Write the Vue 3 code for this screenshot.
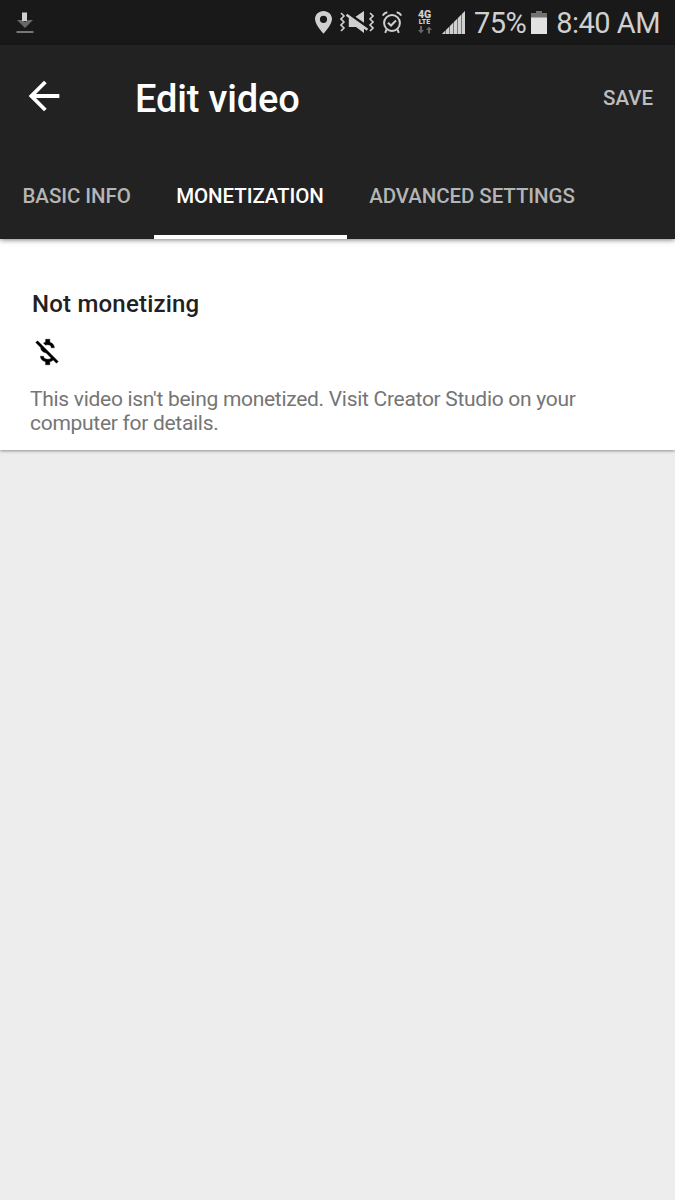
<template>
  <div class="screen">
    <header class="status-bar">
      <svg class="status-bar__download" width="18" height="22" viewBox="0 0 18 22">
        <path fill="#686868" d="M1 8h5l3 2 3-2h5l-8 8z" />
        <path fill="#d0d0d0" d="M6 0.5h5V9H6z" />
        <path fill="#777" d="M0.5 19h17v2h-17z" />
      </svg>
      <svg class="status-bar__pin" width="17" height="23" viewBox="0 0 17 23">
        <path
          fill="#d0d0d0"
          fill-rule="evenodd"
          d="M8.5 0C3.8 0 0 3.6 0 8.1 0 14 8.5 22.7 8.5 22.7S17 14 17 8.1C17 3.6 13.2 0 8.5 0zm0 4.7a3.6 3.6 0 1 1 0 7.2 3.6 3.6 0 0 1 0-7.2z"
        />
      </svg>
      <svg class="status-bar__mute" width="34" height="23" viewBox="0 0 34 23">
        <g fill="none" stroke="#d0d0d0" stroke-width="1.6">
          <path d="M1 2l3 3-3 3 3 3-3 3 3 3-3 3" />
          <path d="M30 2l3 3-3 3 3 3-3 3 3 3-3 3" />
        </g>
        <path fill="#d0d0d0" d="M15.5 5.8L24 0v11.8zM8.8 6.5L24 16.5V22l-8-6H8.8z" />
        <path stroke="#d0d0d0" stroke-width="2.4" d="M6.5 3.8l21 15" />
      </svg>
      <svg class="status-bar__alarm" width="20" height="23" viewBox="0 0 20 23">
        <g fill="none" stroke="#d0d0d0" stroke-width="2">
          <circle cx="10" cy="12" r="7.9" />
          <path d="M6 11.8l3 2.7 5-5M0.8 4.7Q2 2 5.3 1.3M19.2 4.7Q18 2 14.7 1.3M4.5 18.5l-1.3 3.3M15.5 18.5l1.3 3.3" />
        </g>
      </svg>
      <div class="network">
        <div class="network__label">4G<br />LTE</div>
        <svg width="14" height="8" viewBox="0 0 14 8">
          <path fill="#666" d="M2 0h2v4h2L3 7.5 0 4h2zM10 7.5h2V4h2L11 .5 8 4h2z" />
        </svg>
      </div>
      <svg class="status-bar__signal" width="23" height="23" viewBox="0 0 23 23">
        <path fill="#777" d="M0 23L23 0v23z" />
        <path fill="#d0d0d0" d="M0 23l3-3v3zM4 19l3-3v7H4zM8 15l3-3v11H8zM12 11l3-3v15h-3zM16 7l3-3v19h-3zM20 3l3-3v23h-3z" />
      </svg>
      <span class="status-bar__battery-text">75%</span>
      <svg class="status-bar__battery" width="16" height="23" viewBox="0 0 16 23">
        <path fill="#727272" d="M0 2h5V0h6v2h5v5H0z" />
        <path fill="#e2e2e2" d="M0 6.5h16V23H0z" />
      </svg>
      <span class="status-bar__time">8:40 AM</span>
    </header>

    <div class="app-bar">
      <div class="toolbar">
        <button class="toolbar__back" type="button" aria-label="Back">
          <svg width="46" height="46" viewBox="0 0 24 24">
            <path fill="#fff" d="M20 11H7.83l5.59-5.59L12 4l-8 8 8 8 1.41-1.41L7.83 13H20v-2z" />
          </svg>
        </button>
        <h1 class="toolbar__title">Edit video</h1>
        <button class="toolbar__save" type="button">SAVE</button>
      </div>
      <nav class="tabs">
        <button
          v-for="tab in tabs"
          :key="tab"
          :class="['tabs__item', selected === tab ? 'tabs__item--active' : '']"
          type="button"
          @click="selected = tab"
        >
          {{ tab }}
        </button>
      </nav>
    </div>

    <main class="panel">
      <h2 class="panel__title">Not monetizing</h2>
      <svg class="panel__icon" width="34" height="34" viewBox="0 0 24 24">
        <path
          stroke="#000"
          stroke-width="0.3"
          d="M12.5 6.9c1.78 0 2.44.85 2.5 2.1h2.21c-.07-1.72-1.12-3.3-3.21-3.81V3h-3v2.16c-.53.12-1.03.3-1.48.54l1.47 1.47c.41-.17.91-.27 1.51-.27zM5.33 4.06L4.06 5.33 7.5 8.77c0 2.08 1.56 3.21 3.91 3.91l3.51 3.51c-.34.48-1.05.91-2.42.91-2.06 0-2.87-.92-2.98-2.1h-2.2c.12 2.19 1.76 3.42 3.68 3.83V21h3v-2.15c.96-.18 1.82-.55 2.45-1.12l2.22 2.22 1.27-1.27L5.33 4.06z"
        />
      </svg>
      <p class="panel__text">
        This video isn't being monetized. Visit Creator Studio on your computer for details.
      </p>
    </main>
  </div>
</template>

<script setup>
import { ref } from 'vue';

const tabs = ['BASIC INFO', 'MONETIZATION', 'ADVANCED SETTINGS'];
const selected = ref('MONETIZATION');
</script>

<style>
body {
  margin: 0;
  background: #ededed;
}
</style>

<style scoped>
.screen {
  height: 1200px;
  overflow: hidden;
  background: #ededed;
  font-family: Roboto, "Liberation Sans", sans-serif;
}

button {
  margin: 0;
  padding: 0;
  border: 0;
  background: none;
  font-family: inherit;
  cursor: pointer;
}

.status-bar {
  display: flex;
  align-items: center;
  box-sizing: border-box;
  height: 45px;
  padding: 0 15px 0 16px;
  background: #191919;
  color: #d0d0d0;
  font-size: 29px;
  letter-spacing: -0.5px;
  line-height: 43px;
  white-space: nowrap;
}

.status-bar svg {
  flex: none;
}

.status-bar__pin {
  margin-left: 281px;
}

.status-bar__mute {
  margin-left: 8px;
}

.status-bar__alarm {
  margin-left: 8px;
}

.network {
  display: flex;
  flex-direction: column;
  align-items: center;
  width: 15px;
  height: 23px;
  margin-left: 15px;
}

.network__label {
  font-size: 7px;
  font-weight: 900;
  letter-spacing: 0;
  line-height: 7.5px;
  text-align: center;
}

.network__label::first-line {
  font-size: 10.5px;
}

.status-bar__signal {
  margin-left: 10px;
}

.status-bar__battery-text {
  width: 53px;
  margin: 2px 0 0 9px;
}

.status-bar__battery {
  margin-left: 4px;
}

.status-bar__time {
  margin: 2px 0 0 auto;
}

.app-bar {
  position: relative;
  height: 194px;
  background: #222;
  box-shadow: 0 1px 5px rgba(0, 0, 0, 0.5);
}

.toolbar {
  display: flex;
  align-items: center;
  height: 106px;
  padding: 0 22px 0 21px;
}

.toolbar__back {
  display: flex;
  margin-bottom: 4px;
}

.toolbar__title {
  margin: 2px 0 0 68px;
  color: #fff;
  font-size: 38px;
  font-weight: 500;
  letter-spacing: -0.15px;
  line-height: 44px;
}

.toolbar__save {
  margin-left: auto;
  color: #bdbdbd;
  font-size: 20.5px;
  font-weight: 500;
}

.tabs {
  display: flex;
  height: 88px;
}

.tabs__item {
  padding: 5px 23px 0 22.5px;
  border-bottom: 4px solid transparent;
  color: #b5b5b5;
  font-size: 20.5px;
  font-weight: 500;
  letter-spacing: -0.08px;
  white-space: nowrap;
}

.tabs__item--active {
  border-bottom-color: #fff;
  color: #fff;
}

.panel {
  box-sizing: border-box;
  height: 211px;
  padding: 50px 30px 0;
  background: #fff;
  box-shadow: 0 1px 3px rgba(0, 0, 0, 0.4);
}

.panel__title {
  margin: 0 0 0 2px;
  color: #212121;
  font-size: 24px;
  font-weight: 500;
  letter-spacing: 0.2px;
  line-height: 30px;
}

.panel__icon {
  display: block;
  margin: 16px 0 0;
}

.panel__text {
  width: 570px;
  margin: 19px 0 0;
  color: #757575;
  font-size: 21px;
  letter-spacing: -0.29px;
  line-height: 23.5px;
}
</style>
